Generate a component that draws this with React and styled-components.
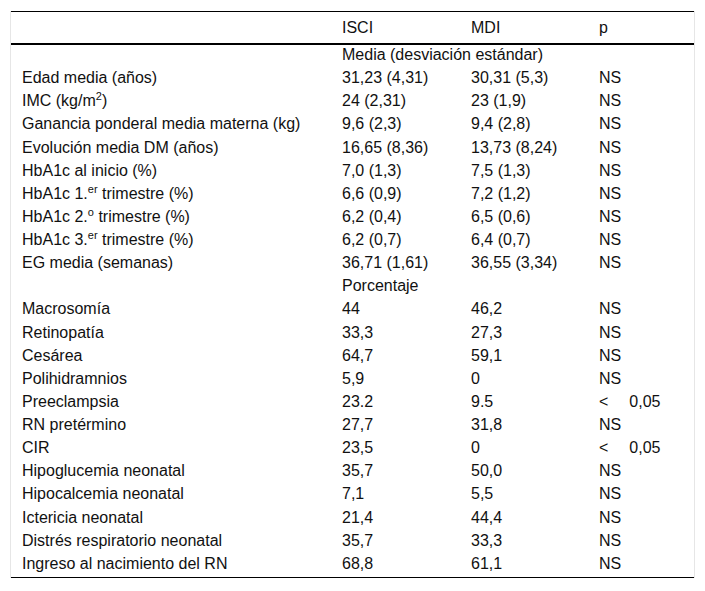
import React from "react";
import styled, { createGlobalStyle } from "styled-components";

const GlobalStyle = createGlobalStyle`
   body {
      margin: 0;
      background: #fff;
      font-family: "Liberation Sans", Arial, sans-serif;
   }
`;

const rows = [
   { type: "section", text: "Media (desviación estándar)" },
   { label: "Edad media (años)", a: "31,23 (4,31)", b: "30,31 (5,3)", p: "NS" },
   { label: <>IMC (kg/m<sup>2</sup>)</>, a: "24 (2,31)", b: "23 (1,9)", p: "NS" },
   { label: "Ganancia ponderal media materna (kg)", a: "9,6 (2,3)", b: "9,4 (2,8)", p: "NS" },
   { label: "Evolución media DM (años)", a: "16,65 (8,36)", b: "13,73 (8,24)", p: "NS" },
   { label: "HbA1c al inicio (%)", a: "7,0 (1,3)", b: "7,5 (1,3)", p: "NS" },
   { label: <>HbA1c 1.<sup>er</sup> trimestre (%)</>, a: "6,6 (0,9)", b: "7,2 (1,2)", p: "NS" },
   { label: <>HbA1c 2.<sup>o</sup> trimestre (%)</>, a: "6,2 (0,4)", b: "6,5 (0,6)", p: "NS" },
   { label: <>HbA1c 3.<sup>er</sup> trimestre (%)</>, a: "6,2 (0,7)", b: "6,4 (0,7)", p: "NS" },
   { label: "EG media (semanas)", a: "36,71 (1,61)", b: "36,55 (3,34)", p: "NS" },
   { type: "section", text: "Porcentaje" },
   { label: "Macrosomía", a: "44", b: "46,2", p: "NS" },
   { label: "Retinopatía", a: "33,3", b: "27,3", p: "NS" },
   { label: "Cesárea", a: "64,7", b: "59,1", p: "NS" },
   { label: "Polihidramnios", a: "5,9", b: "0", p: "NS" },
   { label: "Preeclampsia", a: "23.2", b: "9.5", p: "< 0,05" },
   { label: "RN pretérmino", a: "27,7", b: "31,8", p: "NS" },
   { label: "CIR", a: "23,5", b: "0", p: "< 0,05" },
   { label: "Hipoglucemia neonatal", a: "35,7", b: "50,0", p: "NS" },
   { label: "Hipocalcemia neonatal", a: "7,1", b: "5,5", p: "NS" },
   { label: "Ictericia neonatal", a: "21,4", b: "44,4", p: "NS" },
   { label: "Distrés respiratorio neonatal", a: "35,7", b: "33,3", p: "NS" },
   { label: "Ingreso al nacimiento del RN", a: "68,8", b: "61,1", p: "NS" },
];

const PValue = ({ value }) => {
   if (value.startsWith("<")) {
      return (
         <>
            &lt;<Gap />
            {value.slice(2)}
         </>
      );
   }
   return value;
};

const App = () => {
   return (
      <>
         <GlobalStyle />
         <Page>
            <Frame>
               <Table>
                  <colgroup>
                     <col style={{ width: 320 }} />
                     <col style={{ width: 129 }} />
                     <col style={{ width: 128 }} />
                     <col />
                  </colgroup>
                  <thead>
                     <tr>
                        <Th />
                        <Th>ISCI</Th>
                        <Th>MDI</Th>
                        <Th>p</Th>
                     </tr>
                  </thead>
                  <tbody>
                     {rows.map((row, index) =>
                        row.type === "section" ? (
                           <tr key={index}>
                              <Td />
                              <Td colSpan={3}>{row.text}</Td>
                           </tr>
                        ) : (
                           <tr key={index}>
                              <Td>{row.label}</Td>
                              <Td>{row.a}</Td>
                              <Td>{row.b}</Td>
                              <Td>
                                 <PValue value={row.p} />
                              </Td>
                           </tr>
                        )
                     )}
                  </tbody>
               </Table>
            </Frame>
         </Page>
      </>
   );
};

const Page = styled.div`
   padding: 11px 10px 13px 10px;
`;

const Frame = styled.div`
   border-left: 1px solid #e6e6e6;
   border-right: 1px solid #e6e6e6;
`;

const Table = styled.table`
   width: 100%;
   border-collapse: collapse;
   table-layout: fixed;
   border-top: 1px solid #000;
   border-bottom: 1px solid #000;
   font-size: 16px;
   color: #111;

   sup {
      font-size: 11px;
      line-height: 0;
      vertical-align: 6px;
   }
`;

const Th = styled.th`
   text-align: left;
   font-weight: normal;
   padding: 7px 11px 6px 11px;
   line-height: 18px;
   border-bottom: 2px solid #000;
`;

const Td = styled.td`
   padding: 1px 11px 5px 11px;
   line-height: 17.13px;
   vertical-align: top;
   white-space: nowrap;
`;

const Gap = styled.span`
   display: inline-block;
   width: 21px;
`;

export default App;
